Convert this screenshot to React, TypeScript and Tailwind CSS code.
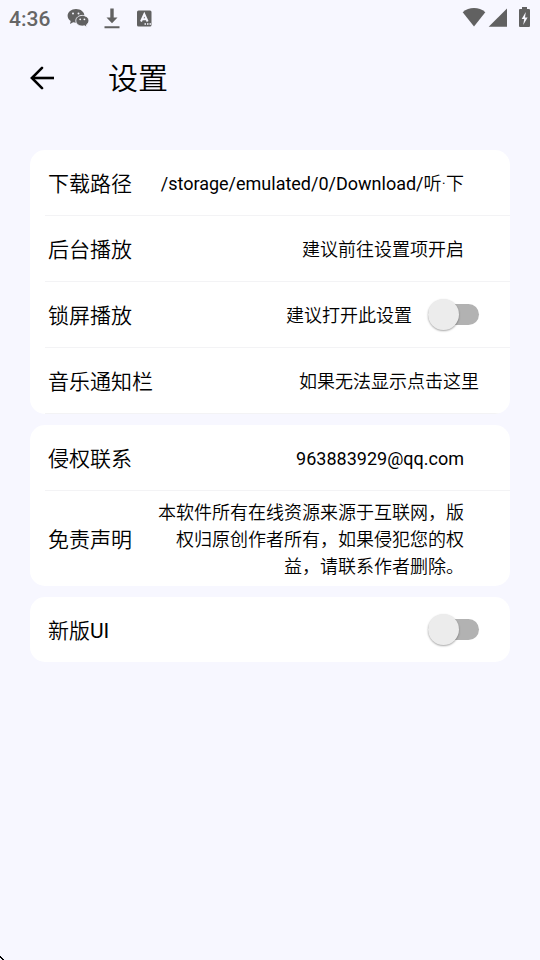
import React, { useState } from 'react';

interface SwitchProps {
  id: string;
  checked: boolean;
  onChange: (checked: boolean) => void;
}

const Switch: React.FC<SwitchProps> = ({ id, checked, onChange }) => (
  <input
    id={id}
    type="checkbox"
    role="switch"
    checked={checked}
    onChange={(e) => onChange(e.target.checked)}
    className="relative h-[21px] w-[51px] shrink-0 cursor-pointer appearance-none rounded-full bg-[#b2b2b2] before:absolute before:-top-[5px] before:left-0 before:size-[31px] before:rounded-full before:bg-[#ececec] before:shadow-[0_1px_2px_rgba(0,0,0,0.35)] before:content-[''] checked:bg-indigo-300 checked:before:left-5 checked:before:bg-indigo-500"
  />
);

interface RowProps {
  label: React.ReactNode;
  htmlFor?: string;
  divider?: boolean;
  children: React.ReactNode;
}

const Row: React.FC<RowProps> = ({ label, htmlFor, divider, children }) => (
  <div className={`ml-[15px] flex items-center justify-between pl-[3px] pr-[31px] ${divider ? 'border-b border-[#f3f3f5]' : ''}`}>
    {htmlFor ? (
      <label htmlFor={htmlFor} className="shrink-0 pt-1 text-[21px] leading-[61px]">{label}</label>
    ) : (
      <span className="shrink-0 pt-1 text-[21px] leading-[61px]">{label}</span>
    )}
    {children}
  </div>
);

const Card: React.FC<{ children: React.ReactNode }> = ({ children }) => (
  <section className="overflow-hidden rounded-[15px] bg-white">{children}</section>
);

const StatusBar: React.FC = () => (
  <div className="flex h-9 items-center justify-between pl-[9px] pr-[9px] text-[#616161]">
    <div className="flex items-center">
      <span className="w-[57px] pt-0.5 text-[21px] font-medium leading-[34px] text-[#666666]">4:36</span>
      <svg viewBox="0 0 24 20" className="h-5 w-6" fill="currentColor">
        <path d="M10 1C5.300 1 1.600 4 1.600 7.800c0 2.200 1.200 4 3.100 5.200L4 16l3.200-1.700c.9.300 1.800.400 2.800.400 4.700 0 8.400-3 8.400-6.900S14.700 1 10 1z" />
        <path d="M16.300 7.400c-3.700 0-6.500 2.300-6.500 5.300s2.800 5.400 6.500 5.400c.8 0 1.500-.1 2.200-.300L21 19.200l-.6-2.300c1.500-1 2.500-2.500 2.500-4.200 0-3-2.900-5.300-6.600-5.300z" stroke="#f7f7ff" strokeWidth=".9" />
        <g fill="#f7f7ff">
          <circle cx="7" cy="5.500" r="1" />
          <circle cx="12.500" cy="5.500" r="1" />
          <circle cx="14.200" cy="11.300" r=".9" />
          <circle cx="18.400" cy="11.300" r=".9" />
        </g>
      </svg>
      <svg viewBox="0 0 16 21" className="ml-3.5 h-[21px] w-4" fill="currentColor">
        <path d="M6.300 0.500h3.400v9H13.500L8 15.300 2.500 9.500h3.800zM.5 18.200h15v2H.5z" />
      </svg>
      <svg viewBox="0 0 15 17" className="ml-[17px] h-[17px] w-[15px]">
        <rect y=".5" width="14.500" height="16" rx="1.500" fill="currentColor" />
        <path d="M4 11.500 7.300 4.200l3.300 7.300M5.400 9.300h3.800" fill="none" stroke="#f7f7ff" strokeWidth="2" />
        <path d="M7.500 13.300h1.500v1.500H7.500zM10 13.300h1.500v1.500H10zM12.500 13.300h1.500v1.500h-1.500z" fill="#f7f7ff" />
      </svg>
    </div>
    <div className="flex items-center">
      <svg viewBox="0 0 24 20" className="h-5 w-6" fill="currentColor">
        <path d="M12 18.500.700 4.200C4 1.500 7.800.100 12 .100s8 1.400 11.300 4.100z" />
      </svg>
      <svg viewBox="0 0 20 20" className="ml-0.5 size-5" fill="currentColor">
        <path d="M19 .500v18.300H.700z" />
      </svg>
      <svg viewBox="0 0 13 22" className="ml-2.5 h-[22px] w-[13px]" fill="currentColor">
        <path d="M4 0h5v2h1.700c.8 0 1.300.500 1.300 1.300v15.400c0 .8-.5 1.300-1.300 1.300H2.300C1.500 20 1 19.500 1 18.700V3.300C1 2.500 1.500 2 2.300 2H4z" />
        <path d="M7.800 5 3.700 12h2.500l-1 6L9.600 10.500H7z" fill="#f7f7ff" />
      </svg>
    </div>
  </div>
);

const App: React.FC = () => {
  const [lockScreen, setLockScreen] = useState(false);
  const [newUi, setNewUi] = useState(false);

  return (
    <div className="relative min-h-screen bg-[#f7f7ff] font-['Roboto','Noto_Sans_CJK_SC',sans-serif] font-[350] text-black">
      <StatusBar />

      <header className="flex h-[84px] items-center pl-[30px]">
        <button type="button" aria-label="返回" className="size-6">
          <svg viewBox="0 0 24 24" className="size-6" fill="none" stroke="currentColor" strokeWidth="2.600">
            <path d="M2.500 12h21.500" />
            <path d="M12 1.800 1.900 12 12 22.200" strokeLinecap="round" />
          </svg>
        </button>
        <h1 className="ml-[54px] pt-0.5 text-[30px] leading-10">设置</h1>
      </header>

      <main className="flex flex-col gap-[11px] px-[30px] pt-[30px] text-lg">
        <Card>
          <Row label="下载路径" divider>
            <span className="mr-[15px] pt-0.5">
              <span className="font-normal">/storage/emulated/0/Download/</span>听·下
            </span>
          </Row>
          <Row label="后台播放" divider>
            <span className="mr-[15px] pt-0.5">建议前往设置项开启</span>
          </Row>
          <Row label="锁屏播放" htmlFor="lock-screen" divider>
            <div className="flex items-center gap-4">
              <span className="pt-0.5">建议打开此设置</span>
              <Switch id="lock-screen" checked={lockScreen} onChange={setLockScreen} />
            </div>
          </Row>
          <Row label="音乐通知栏" divider>
            <span className="pt-0.5">如果无法显示点击这里</span>
          </Row>
        </Card>

        <Card>
          <Row label="侵权联系" divider>
            <span className="mr-[15px] pt-0.5 font-normal">963883929@qq.com</span>
          </Row>
          <Row label="免责声明">
            <p className="mb-1.5 ml-[25px] mr-[15px] mt-2 text-right leading-[27px]">
              本软件所有在线资源来源于互联网，版权归原创作者所有，如果侵犯您的权益，请联系作者删除。
            </p>
          </Row>
        </Card>

        <Card>
          <Row label={<>新版<span className="font-normal">UI</span></>} htmlFor="new-ui">
            <Switch id="new-ui" checked={newUi} onChange={setNewUi} />
          </Row>
        </Card>
      </main>

      {/* rounded screen corner */}
      <svg viewBox="0 0 4 4" className="absolute bottom-0 left-0 size-1" fill="black">
        <path d="M0 0h1v1h1v1h1v1h1v1H2V3H1V2H0z" />
      </svg>
    </div>
  );
};

export default App;
